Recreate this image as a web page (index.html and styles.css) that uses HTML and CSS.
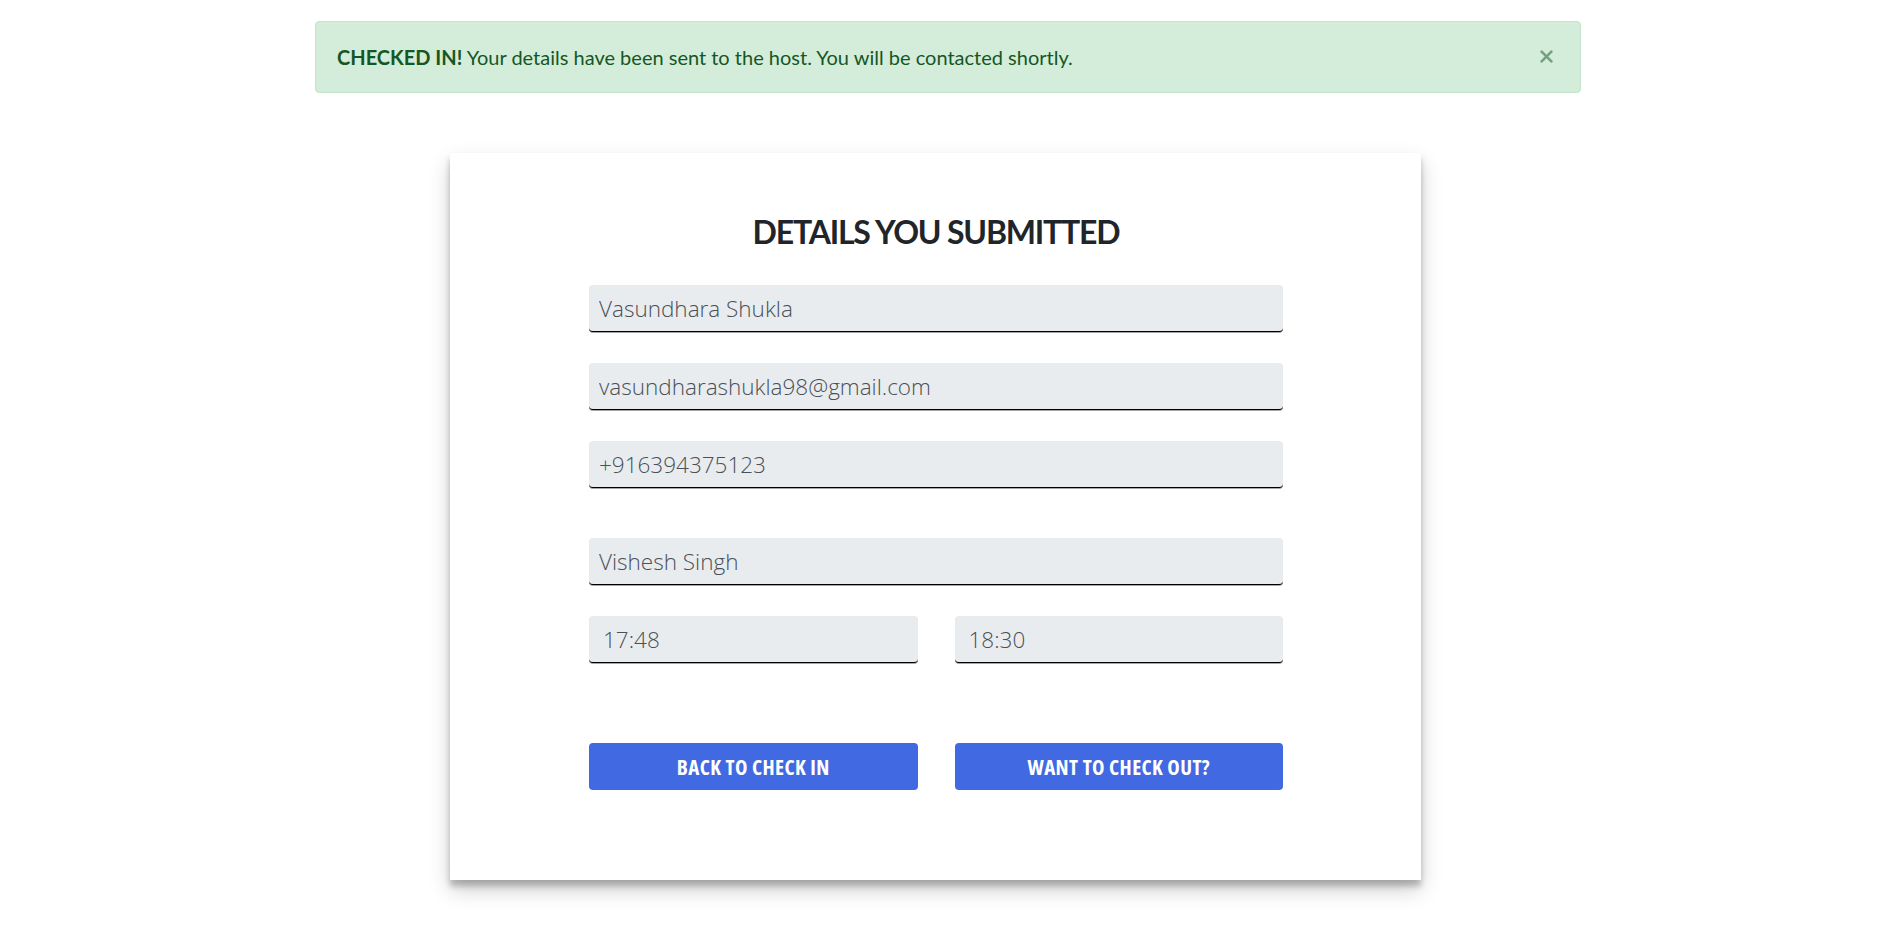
FILE: index.html
```html
<!DOCTYPE html>
<html lang="en">
<head>
<meta charset="utf-8">
<title>Details you submitted</title>
<link rel="stylesheet" href="styles.css">
</head>
<body>
<div class="alert" role="alert">
  <p class="alert-text"><strong>CHECKED IN!</strong> Your details have been sent to the host. You will be contacted shortly.</p>
  <button class="close" type="button" aria-label="Close">
    <svg viewBox="0 0 12 12" width="13" height="13"><path d="M1.5 1.5 L10.5 10.5 M10.5 1.5 L1.5 10.5" stroke="currentColor" stroke-width="2.4" stroke-linecap="round" fill="none"/></svg>
  </button>
</div>

<main class="card">
  <h1 class="title">DETAILS YOU SUBMITTED</h1>
  <form class="form">
    <div class="field"><input class="input" type="text" value="Vasundhara Shukla" readonly></div>
    <div class="field"><input class="input" type="text" value="vasundharashukla98@gmail.com" readonly></div>
    <div class="field"><input class="input" type="text" value="+916394375123" readonly></div>
    <div class="field host"><input class="input" type="text" value="Vishesh Singh" readonly></div>
    <div class="row">
      <input class="input time" type="text" value="17:48" readonly>
      <input class="input time" type="text" value="18:30" readonly>
    </div>
    <div class="row buttons">
      <button class="btn" type="button">BACK TO CHECK IN</button>
      <button class="btn" type="button">WANT TO CHECK OUT?</button>
    </div>
  </form>
</main>
</body>
</html>
```
FILE: styles.css
```css
* { box-sizing: border-box; }

html, body { min-height: 100%; }

body {
  margin: 0;
  padding-bottom: 40px;
  background: #fff;
  font-family: Lato, "Open Sans", sans-serif;
  color: #212529;
}

.alert {
  position: relative;
  width: 1266px;
  margin: 21px auto 0;
  padding: 22px 64px 21px 21px;
  background: #d4edda;
  border: 1px solid #c3e6cb;
  border-radius: 4px;
  color: #155724;
}

.alert-text {
  margin: 0;
  font-size: 20px;
  line-height: 27px;
}

.alert-text strong { font-weight: 700; }

.close {
  position: absolute;
  top: 26px;
  right: 26px;
  width: 16px;
  height: 16px;
  padding: 0;
  border: 0;
  background: transparent;
  color: #155724;
  opacity: .5;
  display: flex;
  align-items: center;
  justify-content: center;
}

.card {
  width: 971px;
  margin: 60px 0 0 calc(50% - 498px);
  padding: 58px 138px 90px 139px;
  background: #fff;
  box-shadow: 0 6px 6px rgba(0,0,0,.23), 0 10px 20px rgba(0,0,0,.19);
}

.title {
  margin: 0 0 33px;
  text-align: center;
  font-family: Lato, "Open Sans", sans-serif;
  font-size: 32px;
  line-height: 41px;
  font-weight: 700;
  letter-spacing: -1.2px;
  color: #212529;
}

.form { display: flex; flex-direction: column; }

.field { margin-bottom: 31px; }
.field.host { margin-top: 19px; }

.input {
  display: block;
  width: 100%;
  height: 47px;
  padding: 0 10px;
  background: #e9ecef;
  border: 0;
  border-bottom: 1px solid #000;
  box-shadow: 0 1px 0 rgba(0,0,0,.35);
  border-radius: 4px;
  font-family: "Open Sans", Inter, sans-serif;
  font-weight: 300;
  font-size: 22.5px;
  color: #495057;
  outline: none;
}

.row {
  display: flex;
  gap: 37px;
}

.input.time { flex: 1; padding-left: 14px; }

.buttons { margin-top: 80px; }

.btn {
  flex: 1;
  height: 47px;
  border: 0;
  border-radius: 4px;
  background: #4169e1;
  color: #fff;
  font-family: "Open Sans", Lato, sans-serif;
  font-stretch: 75%;
  font-weight: 700;
  font-size: 21px;
  letter-spacing: 0.4px;
}
```
